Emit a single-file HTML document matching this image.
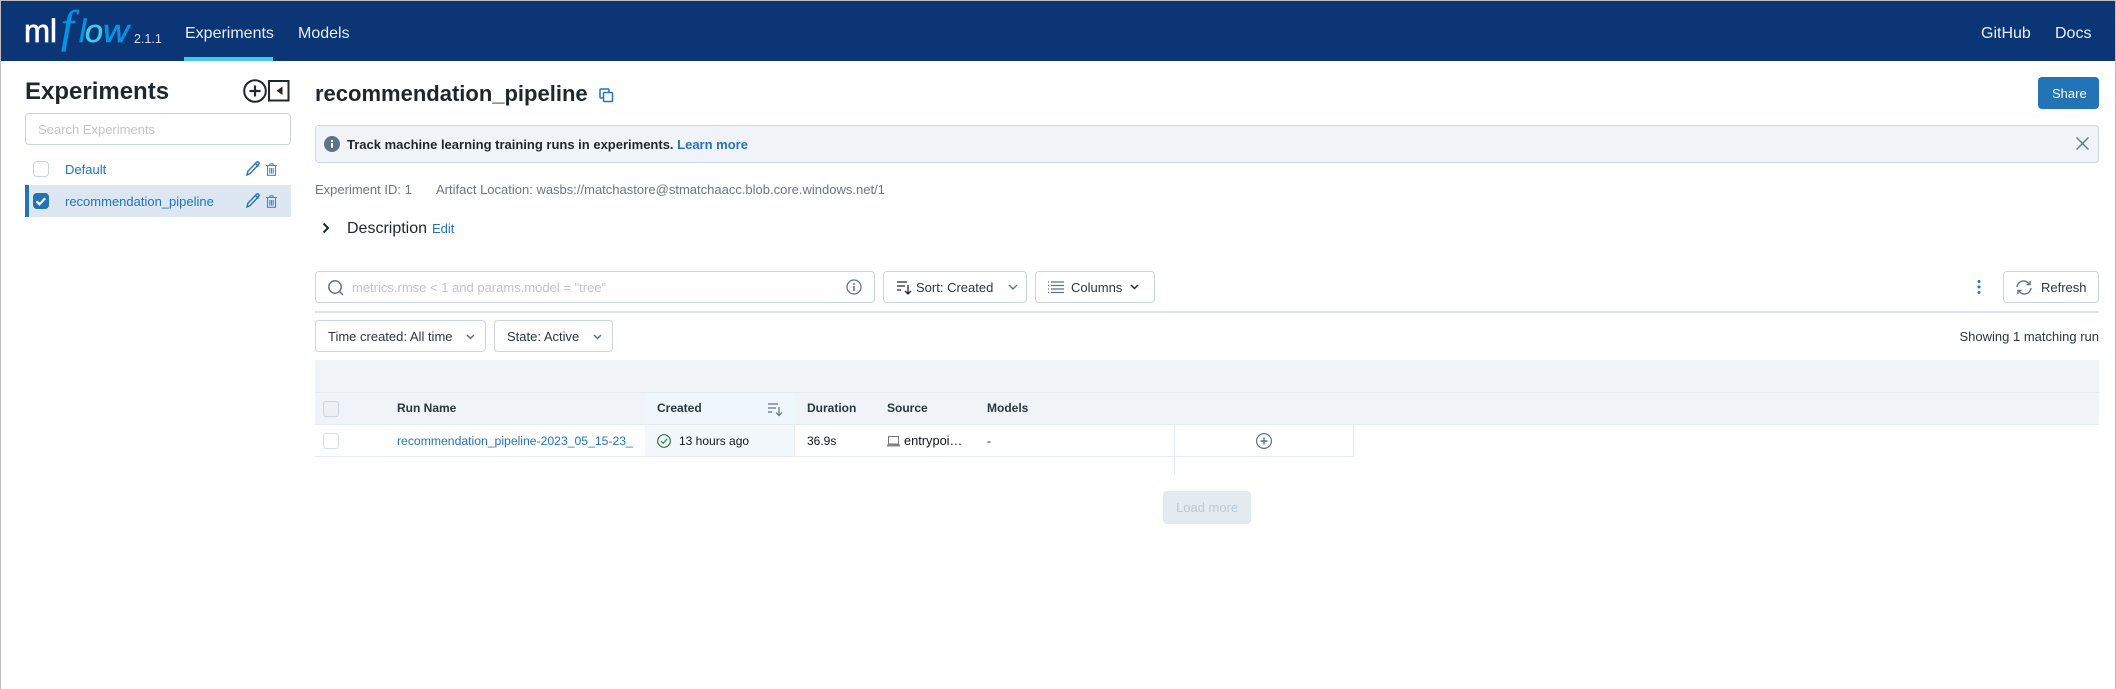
<!DOCTYPE html>
<html><head><meta charset="utf-8"><title>MLflow</title>
<style>
html,body{margin:0;padding:0;background:#fff;width:2116px;height:689px;overflow:hidden;font-family:"Liberation Sans",sans-serif;color:#1f272d}
#f{position:absolute;left:0;top:0;width:2116px;height:689px;overflow:hidden}
.a{position:absolute}
.t{position:absolute;white-space:nowrap;line-height:20px;font-size:13px}
.b{position:absolute;box-sizing:border-box;border:1px solid #cbd5e1;border-radius:4px;background:#fff}
.blue{color:#2374bb}
svg{position:absolute;overflow:visible}
</style></head><body><div id="f">
<div class="a" style="left:0;top:0;width:2116px;height:1px;background:#bdbdbd"></div>
<div class="a" style="left:0;top:0;width:1px;height:689px;background:#bdbdbd"></div>
<div class="a" style="left:2115px;top:0;width:1px;height:689px;background:#bdbdbd"></div>
<div class="a" style="left:1px;top:1px;width:2114px;height:60px;background:#0b3574"></div>
<div class="a" style="left:184px;top:57px;width:89px;height:4px;background:#43c9ed"></div>

<svg style="left:0;top:0" width="180" height="61">
<text x="24" y="42" font-family="Liberation Sans" font-size="32" fill="#fff" stroke="#fff" stroke-width=".7" textLength="33" lengthAdjust="spacingAndGlyphs">ml</text>
<text x="61" y="42" font-family="Liberation Serif" font-style="italic" font-size="46" fill="#0194e2" stroke="#0194e2" stroke-width=".4">f</text>
<text x="79" y="42" font-family="Liberation Sans" font-style="italic" font-size="32" fill="#0194e2" stroke="#0194e2" stroke-width=".5">l</text>
<text x="85" y="42" font-family="Liberation Sans" font-style="italic" font-size="32" fill="#43c9ed" stroke="#43c9ed" stroke-width=".5" textLength="18" lengthAdjust="spacingAndGlyphs">o</text>
<text x="103" y="42" font-family="Liberation Sans" font-style="italic" font-size="32" fill="#0194e2" stroke="#0194e2" stroke-width=".5" textLength="26" lengthAdjust="spacingAndGlyphs">w</text>
</svg>
<div class="t" style="left:134px;top:29px;color:#d5deea;font-size:12.500px">2.1.1</div>
<div class="t" style="left:185px;top:24px;font-size:16px;color:#e6f1f5">Experiments</div>
<div class="t" style="left:298px;top:24px;font-size:16px;color:#e6f1f5">Models</div>
<div class="t" style="left:1981px;top:24px;font-size:16px;color:#e6f1f5">GitHub</div>
<div class="t" style="left:2055px;top:24px;font-size:16px;color:#e6f1f5">Docs</div>

<div class="t" style="left:25px;top:82px;font-size:24px;font-weight:700">Experiments</div>
<svg style="left:243px;top:79px" width="24" height="24" fill="none" stroke="#1f272d" stroke-width="2"><circle cx="12" cy="12" r="10.800"/><path d="M12 6.500v11M6.500 12h11" stroke-width="2.200"/></svg>
<svg style="left:268px;top:80px" width="22" height="22"><rect x="1" y="1" width="19.500" height="19.500" fill="none" stroke="#1f272d" stroke-width="2"/><path d="M14.500 6.500v8.500L8.500 10.700z" fill="#1f272d"/></svg>
<div class="b" style="left:25px;top:113px;width:266px;height:32px"></div>
<div class="t" style="left:38px;top:120px;color:#c4c4c4">Search Experiments</div>

<div class="a" style="left:33px;top:161px;width:16px;height:16px;box-sizing:border-box;border:1px solid #cbd5e1;border-radius:4px"></div>
<div class="t blue" style="left:65px;top:160px">Default</div>
<svg style="left:246px;top:161px" width="14" height="15" fill="none" stroke="#2374bb" stroke-width="1.400"><path d="M1 14l.8-3.600L10.500 1.300c.7-.6 1.500-.6 2.200 0 .6.700.6 1.500 0 2.200L4 12.600z"/><path d="M9.400 2.500l3 3"/></svg>
<svg style="left:266px;top:163px" width="12" height="13" fill="none" stroke="#3f8ac9" stroke-width="1.100"><path d="M0 2.500h11M4 2.500V.8h3v1.700M1.500 2.500v9.800h8V2.500M3.800 5v5.500M5.500 5v5.500M7.200 5v5.500"/></svg>

<div class="a" style="left:25px;top:185px;width:266px;height:32px;background:#dce7f2"></div>
<div class="a" style="left:25px;top:185px;width:4px;height:32px;background:#2272b4"></div>
<div class="a" style="left:33px;top:193px;width:16px;height:16px;border-radius:4px;background:#2272b4"></div>
<svg style="left:33px;top:193px" width="16" height="16" fill="none" stroke="#fff" stroke-width="2.200"><path d="M3.500 8.300l3 2.900 5.700-6"/></svg>
<div class="t blue" style="left:65px;top:192px">recommendation_pipeline</div>
<svg style="left:246px;top:193px" width="14" height="15" fill="none" stroke="#2374bb" stroke-width="1.400"><path d="M1 14l.8-3.600L10.500 1.300c.7-.6 1.500-.6 2.200 0 .6.700.6 1.500 0 2.200L4 12.600z"/><path d="M9.400 2.500l3 3"/></svg>
<svg style="left:266px;top:195px" width="12" height="13" fill="none" stroke="#3f8ac9" stroke-width="1.100"><path d="M0 2.500h11M4 2.500V.8h3v1.700M1.500 2.500v9.800h8V2.500M3.800 5v5.500M5.500 5v5.500M7.200 5v5.500"/></svg>

<div class="t" style="left:315px;top:84px;font-size:22px;font-weight:700;line-height:20px">recommendation_pipeline</div>
<svg style="left:599px;top:88px" width="15" height="15" fill="none" stroke="#2374bb" stroke-width="1.500"><rect x="1" y="1" width="9" height="9" rx="1"/><rect x="4.500" y="4.500" width="9" height="9" rx="1" fill="#fff"/></svg>
<div class="a" style="left:2038px;top:77px;width:61px;height:32px;border-radius:4px;background:#2374b6"></div>
<div class="t" style="left:2052px;top:84px;color:#fff">Share</div>

<div class="a" style="left:315px;top:125px;width:1784px;height:38px;box-sizing:border-box;border:1px solid #cbd8e4;border-radius:4px;background:#f0f4f8"></div>
<svg style="left:324px;top:136px" width="16" height="16"><circle cx="8" cy="8" r="8" fill="#5f7286"/><rect x="7" y="7" width="2" height="5" fill="#fff"/><rect x="7" y="4" width="2" height="2" fill="#fff"/></svg>
<div class="t" style="left:347px;top:135px;font-weight:700">Track machine learning training runs in experiments. <span class="blue">Learn more</span></div>
<svg style="left:2076px;top:138px" width="13" height="13" fill="none" stroke="#6b7a88" stroke-width="1.500"><path d="M.5-.5l12 12M12.500-.5l-12 12"/></svg>

<div class="t" style="left:315px;top:180px;color:#6b7785">Experiment ID: 1</div>
<div class="t" style="left:436px;top:180px;color:#6b7785">Artifact Location: wasbs://matchastore@stmatchaacc.blob.core.windows.net/1</div>
<svg style="left:322px;top:222px" width="8" height="12" fill="none" stroke="#1f272d" stroke-width="2"><path d="M1.500 1.500L6 6l-4.500 4.500"/></svg>
<div class="t" style="left:347px;top:219px;font-size:16px">Description</div>
<div class="t blue" style="left:432px;top:219px">Edit</div>

<div class="b" style="left:315px;top:271px;width:560px;height:32px"></div>
<svg style="left:328px;top:280px" width="16" height="16" fill="none" stroke="#5f7286" stroke-width="1.500"><circle cx="7" cy="7" r="6.200"/><path d="M11.500 11.500L15 15"/></svg>
<div class="t" style="left:352px;top:278px;color:#c4c4c4">metrics.rmse &lt; 1 and params.model = "tree"</div>
<svg style="left:846px;top:279px" width="16" height="16" fill="none" stroke="#5f7286" stroke-width="1.300"><circle cx="8" cy="8" r="7"/><path d="M8 7v5M8 4v1.800" stroke-width="1.500"/></svg>

<div class="b" style="left:883px;top:271px;width:144px;height:32px"></div>
<svg style="left:897px;top:281px" width="15" height="14" fill="none" stroke="#1f272d" stroke-width="1.300"><path d="M0 1h10M0 5h8M0 9h4M11 4v9M8 10l3 3 3-3"/></svg>
<div class="t" style="left:916px;top:278px;color:#2b3640">Sort: Created</div>
<svg style="left:1008px;top:284px" width="10" height="7" fill="none" stroke="#5f7286" stroke-width="1.500"><path d="M1 1l4 4 4-4"/></svg>

<div class="b" style="left:1035px;top:271px;width:120px;height:32px"></div>
<svg style="left:1048px;top:281px" width="17" height="13" fill="none" stroke="#5f7286" stroke-width="1.200"><path d="M0 1h1M3 1h13M0 4.500h1M3 4.500h13M0 8h1M3 8h13M0 11.500h1M3 11.500h13"/></svg>
<div class="t" style="left:1071px;top:278px;color:#2b3640">Columns</div>
<svg style="left:1130px;top:284px" width="9" height="6" fill="none" stroke="#1f272d" stroke-width="1.500"><path d="M1 1l3.500 3.500L8 1"/></svg>

<svg style="left:1976px;top:280px" width="6" height="14" fill="#2374bb"><circle cx="3" cy="1.500" r="1.500"/><circle cx="3" cy="7" r="1.500"/><circle cx="3" cy="12.500" r="1.500"/></svg>
<div class="b" style="left:2003px;top:271px;width:96px;height:32px"></div>
<svg style="left:2016px;top:280px" width="16" height="15" fill="none" stroke="#5f7286" stroke-width="1.400"><path d="M1 7A6.500 6.500 0 0 1 13 4M15 8A6.500 6.500 0 0 1 3 11"/><path d="M14 1v3.500h-3.500M2 14v-3.500h3.500"/></svg>
<div class="t" style="left:2041px;top:278px;color:#2b3640">Refresh</div>

<div class="a" style="left:315px;top:311px;width:1784px;height:2px;background:#dde4ec"></div>

<div class="b" style="left:315px;top:320px;width:171px;height:32px"></div>
<div class="t" style="left:328px;top:327px;color:#2b3640">Time created: All time</div>
<svg style="left:466px;top:334px" width="9" height="6" fill="none" stroke="#5f7286" stroke-width="1.500"><path d="M1 1l3.500 3.500L8 1"/></svg>
<div class="b" style="left:494px;top:320px;width:119px;height:32px"></div>
<div class="t" style="left:507px;top:327px;color:#2b3640">State: Active</div>
<svg style="left:593px;top:334px" width="9" height="6" fill="none" stroke="#5f7286" stroke-width="1.500"><path d="M1 1l3.500 3.500L8 1"/></svg>
<div class="t" style="right:17px;top:327px;color:#2b3640">Showing 1 matching run</div>

<div class="a" style="left:315px;top:360px;width:1784px;height:64px;background:#f0f4f8"></div>
<div class="a" style="left:315px;top:392px;width:1784px;height:1px;background:#e3eaf1"></div>
<div class="a" style="left:315px;top:424px;width:1784px;height:1px;background:#e3eaf1"></div>
<div class="a" style="left:645px;top:393px;width:150px;height:31px;background:#eff6fc"></div>
<div class="a" style="left:645px;top:425px;width:150px;height:31px;background:#f3f8fd"></div>
<div class="a" style="left:794px;top:425px;width:1px;height:31px;background:#e3eaf1"></div>
<div class="a" style="left:315px;top:456px;width:1039px;height:1px;background:#e3eaf1"></div>
<div class="a" style="left:1174px;top:425px;width:1px;height:49px;background:#e3eaf1"></div>
<div class="a" style="left:1353px;top:425px;width:1px;height:32px;background:#e3eaf1"></div>

<div class="a" style="left:323px;top:401px;width:16px;height:16px;box-sizing:border-box;border:1px solid #cbd5e1;border-radius:3px;background:#edf1f5"></div>
<div class="a" style="left:323px;top:433px;width:16px;height:16px;box-sizing:border-box;border:1px solid #d5dee7;border-radius:3px;background:#fff"></div>
<div class="t" style="left:397px;top:398px;font-size:12px;font-weight:700;color:#2b3640">Run Name</div>
<div class="t" style="left:657px;top:398px;font-size:12px;font-weight:700;color:#2b3640">Created</div>
<svg style="left:768px;top:403px" width="15" height="13" fill="none" stroke="#5f7286" stroke-width="1.200"><path d="M0 1h10M0 5h8M0 9h4M11 4v8M8 9.500l3 3 3-3"/></svg>
<div class="t" style="left:807px;top:398px;font-size:12px;font-weight:700;color:#2b3640">Duration</div>
<div class="t" style="left:887px;top:398px;font-size:12px;font-weight:700;color:#2b3640">Source</div>
<div class="t" style="left:987px;top:398px;font-size:12px;font-weight:700;color:#2b3640">Models</div>

<div class="t blue" style="left:397px;top:431px;font-size:12.200px">recommendation_pipeline-2023_05_15-23_</div>
<svg style="left:657px;top:434px" width="14" height="14" fill="none" stroke="#277c43" stroke-width="1.200"><circle cx="7" cy="7" r="6.300"/><path d="M4 7.200l2.200 2.100L10 5"/></svg>
<div class="t" style="left:679px;top:431px;font-size:12px;color:#11171c">13 hours ago</div>
<div class="t" style="left:807px;top:431px;font-size:12px;color:#11171c">36.9s</div>
<svg style="left:887px;top:436px" width="13" height="11" fill="none" stroke="#777" stroke-width="1"><rect x="1.500" y=".5" width="10" height="7.500"/><rect x="0" y="8.500" width="13" height="2" fill="#888" stroke="none"/></svg>
<div class="t" style="left:904px;top:431px;font-size:12.800px;color:#11171c">entrypoi…</div>
<div class="t" style="left:987px;top:431px;font-size:12px;color:#11171c">-</div>
<svg style="left:1256px;top:433px" width="16" height="16" fill="none" stroke="#5f7286" stroke-width="1.200"><circle cx="8" cy="8" r="7.400"/><path d="M8 4.500v7M4.500 8h7" stroke-width="1.400"/></svg>

<div class="a" style="left:1163px;top:491px;width:88px;height:33px;border-radius:4px;background:#e3eaf1"></div>
<div class="t" style="left:1176px;top:498px;color:#bcc9d6">Load more</div>
</div></body></html>
